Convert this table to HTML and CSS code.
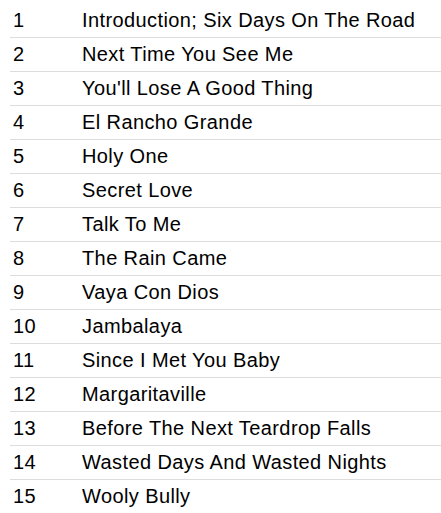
FILE: index.html
```html
<!DOCTYPE html>
<html>
<head>
<meta charset="utf-8">
<link rel="stylesheet" href="styles.css">
</head>
<body>
<table class="tracks">
<tbody>
<tr><td class="num">1</td><td class="title">Introduction; Six Days On The Road</td></tr>
<tr><td class="num">2</td><td class="title">Next Time You See Me</td></tr>
<tr><td class="num">3</td><td class="title">You'll Lose A Good Thing</td></tr>
<tr><td class="num">4</td><td class="title">El Rancho Grande</td></tr>
<tr><td class="num">5</td><td class="title">Holy One</td></tr>
<tr><td class="num">6</td><td class="title">Secret Love</td></tr>
<tr><td class="num">7</td><td class="title">Talk To Me</td></tr>
<tr><td class="num">8</td><td class="title">The Rain Came</td></tr>
<tr><td class="num">9</td><td class="title">Vaya Con Dios</td></tr>
<tr><td class="num">10</td><td class="title">Jambalaya</td></tr>
<tr><td class="num">11</td><td class="title">Since I Met You Baby</td></tr>
<tr><td class="num">12</td><td class="title">Margaritaville</td></tr>
<tr><td class="num">13</td><td class="title">Before The Next Teardrop Falls</td></tr>
<tr><td class="num">14</td><td class="title">Wasted Days And Wasted Nights</td></tr>
<tr><td class="num">15</td><td class="title">Wooly Bully</td></tr>
</tbody>
</table>
</body>
</html>
```
FILE: styles.css
```css
html, body {
  margin: 0;
  padding: 0;
  background: #fff;
}
body {
  padding: 4px 0 0 10px;
  font-family: "Liberation Sans", Arial, sans-serif;
  font-size: 20px;
  letter-spacing: 0.4px;
  color: #000;
  overflow: hidden;
}
.tracks {
  border-collapse: collapse;
  width: 440px;
}
.tracks td {
  height: 33px;
  padding: 0;
  border-bottom: 1px solid #dddddd;
  vertical-align: middle;
  white-space: nowrap;
}
.tracks .num {
  width: 69px;
  padding-left: 3px;
}
```
